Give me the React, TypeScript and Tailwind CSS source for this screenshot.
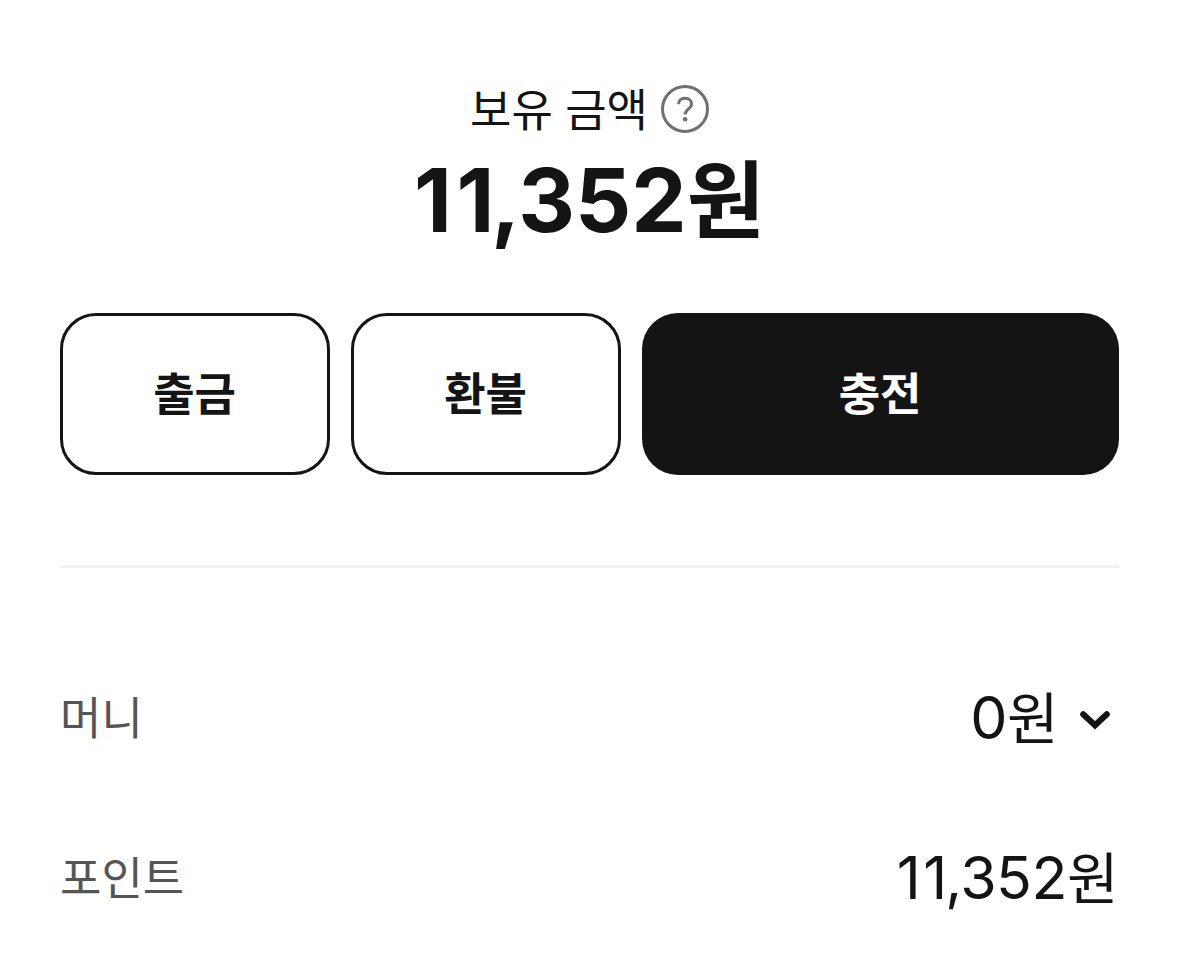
import type { ReactNode } from 'react';

const FONT = "font-['Inter','Noto_Sans_CJK_KR',sans-serif]";

interface BalanceRowProps {
  label: string;
  amount: ReactNode;
  children?: ReactNode;
}

function BalanceRow({ label, amount, children }: BalanceRowProps) {
  return (
    <div className="flex h-[160px] items-center justify-between">
      <span className="text-[45px] leading-none text-[#555555]">{label}</span>
      <div className="flex items-center">
        <span className="pt-px pr-px text-[59px] leading-[60px] tracking-[-0.5px]">
          {amount}
          <span className="text-[56px]">원</span>
        </span>
        {children}
      </div>
    </div>
  );
}

export default function App() {
  return (
    <main className={`h-[967px] w-[1179px] overflow-hidden bg-white px-[60px] text-[#141414] ${FONT}`}>
      <div className="mt-[85px] flex h-[48px] items-center justify-center gap-[13px]">
        <h2 className="pt-[2px] text-[45px] leading-none tracking-[-0.1px]">보유 금액</h2>
        <button type="button" aria-label="도움말">
          <svg className="block h-[48px] w-[48px]" viewBox="0 0 48 48" fill="none" stroke="#707070" strokeWidth="3">
            <circle cx="24" cy="24" r="22.5" />
            <path d="M17.6 19.2C17.6 15.6 20.2 13.3 24 13.3c3.9 0 6.5 2.2 6.5 5.6 0 5.3-6.4 5.2-6.4 10.6" />
            <circle cx="24.1" cy="34.2" r="2.3" fill="#707070" stroke="none" />
          </svg>
        </button>
      </div>
      <p className="mt-[12px] h-[110px] text-center text-[88px] leading-[110px] font-bold">
        <span className="tracking-[4.6px]">1</span>
        <span className="tracking-[-3.6px]">1</span>
        ,352<span className="text-[85px]">원</span>
      </p>

      <div className="mt-[58px] flex h-[162px] gap-[21px] text-[45px] font-bold tracking-[-0.2px]">
        <button type="button" className="w-[270px] rounded-[36px] border-3 border-[#141414] pt-[2px] pr-px">출금</button>
        <button type="button" className="w-[270px] rounded-[36px] border-3 border-[#141414] pt-[2px] pr-px">환불</button>
        <button type="button" className="flex-1 rounded-[36px] bg-[#141414] pt-[2px] pr-px text-white">충전</button>
      </div>

      <hr className="mt-[90px] border-0 border-t-3 border-[#f2f2f2]" />

      <div className="mt-[70px]">
        <BalanceRow label="머니" amount="0">
          <svg className="ml-[12px] h-[48px] w-[48px]" viewBox="0 0 48 48" fill="none" stroke="#141414" strokeWidth="6" strokeLinecap="round">
            <path d="M12.2 20.2l11.8 11.1 11.8-11.1" />
          </svg>
        </BalanceRow>
        <BalanceRow
          label="포인트"
          amount={
            <>
              <span className="tracking-[2.6px]">1</span>
              <span className="tracking-[-2px]">1</span>
              ,352
            </>
          }
        />
      </div>
    </main>
  );
}
